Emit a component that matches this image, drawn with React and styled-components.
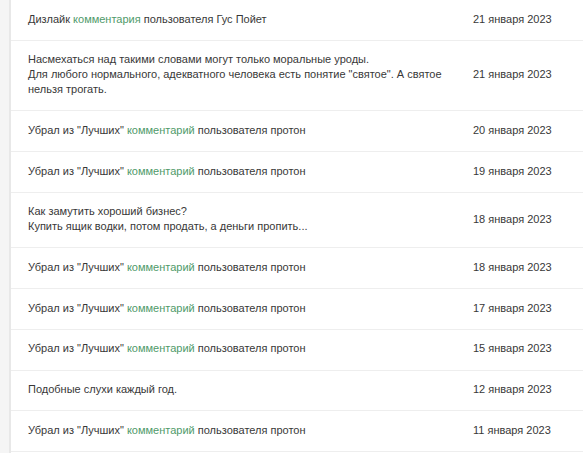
import React from 'react';
import styled, { createGlobalStyle } from 'styled-components';

const GlobalStyle = createGlobalStyle`
  html, body {
    margin: 0;
    padding: 0;
    background: #f5f5f5;
  }
  body {
    font-family: "Liberation Sans", Arial, sans-serif;
    color: #383838;
  }
`;

const rows = [
  { parts: ['Дизлайк ', { link: 'комментария' }, ' пользователя Гус Пойет'], date: '21 января 2023' },
  {
    parts: [
      'Насмехаться над такими словами могут только моральные уроды.\nДля любого нормального, адекватного человека есть понятие "святое". А святое нельзя трогать.',
    ],
    date: '21 января 2023',
  },
  { parts: ['Убрал из "Лучших" ', { link: 'комментарий' }, ' пользователя протон'], date: '20 января 2023' },
  { parts: ['Убрал из "Лучших" ', { link: 'комментарий' }, ' пользователя протон'], date: '19 января 2023' },
  {
    parts: ['Как замутить хороший бизнес?\nКупить ящик водки, потом продать, а деньги пропить...'],
    date: '18 января 2023',
  },
  { parts: ['Убрал из "Лучших" ', { link: 'комментарий' }, ' пользователя протон'], date: '18 января 2023' },
  { parts: ['Убрал из "Лучших" ', { link: 'комментарий' }, ' пользователя протон'], date: '17 января 2023' },
  { parts: ['Убрал из "Лучших" ', { link: 'комментарий' }, ' пользователя протон'], date: '15 января 2023' },
  { parts: ['Подобные слухи каждый год.'], date: '12 января 2023' },
  { parts: ['Убрал из "Лучших" ', { link: 'комментарий' }, ' пользователя протон'], date: '11 января 2023' },
];

const App = () => (
  <>
    <GlobalStyle />
    <Page>
      <Panel>
        {rows.map((row, i) => (
          <Row key={i}>
            <Message>
              {row.parts.map((part, j) =>
                typeof part === 'string' ? part : <Link key={j} href="#">{part.link}</Link>
              )}
            </Message>
            <DateCell>{row.date}</DateCell>
          </Row>
        ))}
      </Panel>
    </Page>
  </>
);

const Page = styled.div`
  padding-left: 9px;
  min-height: 453px;
`;

const Panel = styled.div`
  background: #fff;
  border-left: 2px solid #e8e8e8;
  min-height: 453px;
  padding: 0 2px 0 0;
`;

const Row = styled.div`
  display: grid;
  grid-template-columns: 1fr 110px;
  align-items: center;
  gap: 16px;
  padding: 11.5px 0 13.2px 17px;
  border-bottom: 1px solid #eeeeee;
  font-size: 11px;
  line-height: 15px;
`;

const Message = styled.div`
  white-space: pre-line;
  max-width: 425px;
`;

const Link = styled.a`
  color: #4f9a6a;
  text-decoration: none;
`;

const DateCell = styled.div`
  color: #383838;
`;

export default App;
